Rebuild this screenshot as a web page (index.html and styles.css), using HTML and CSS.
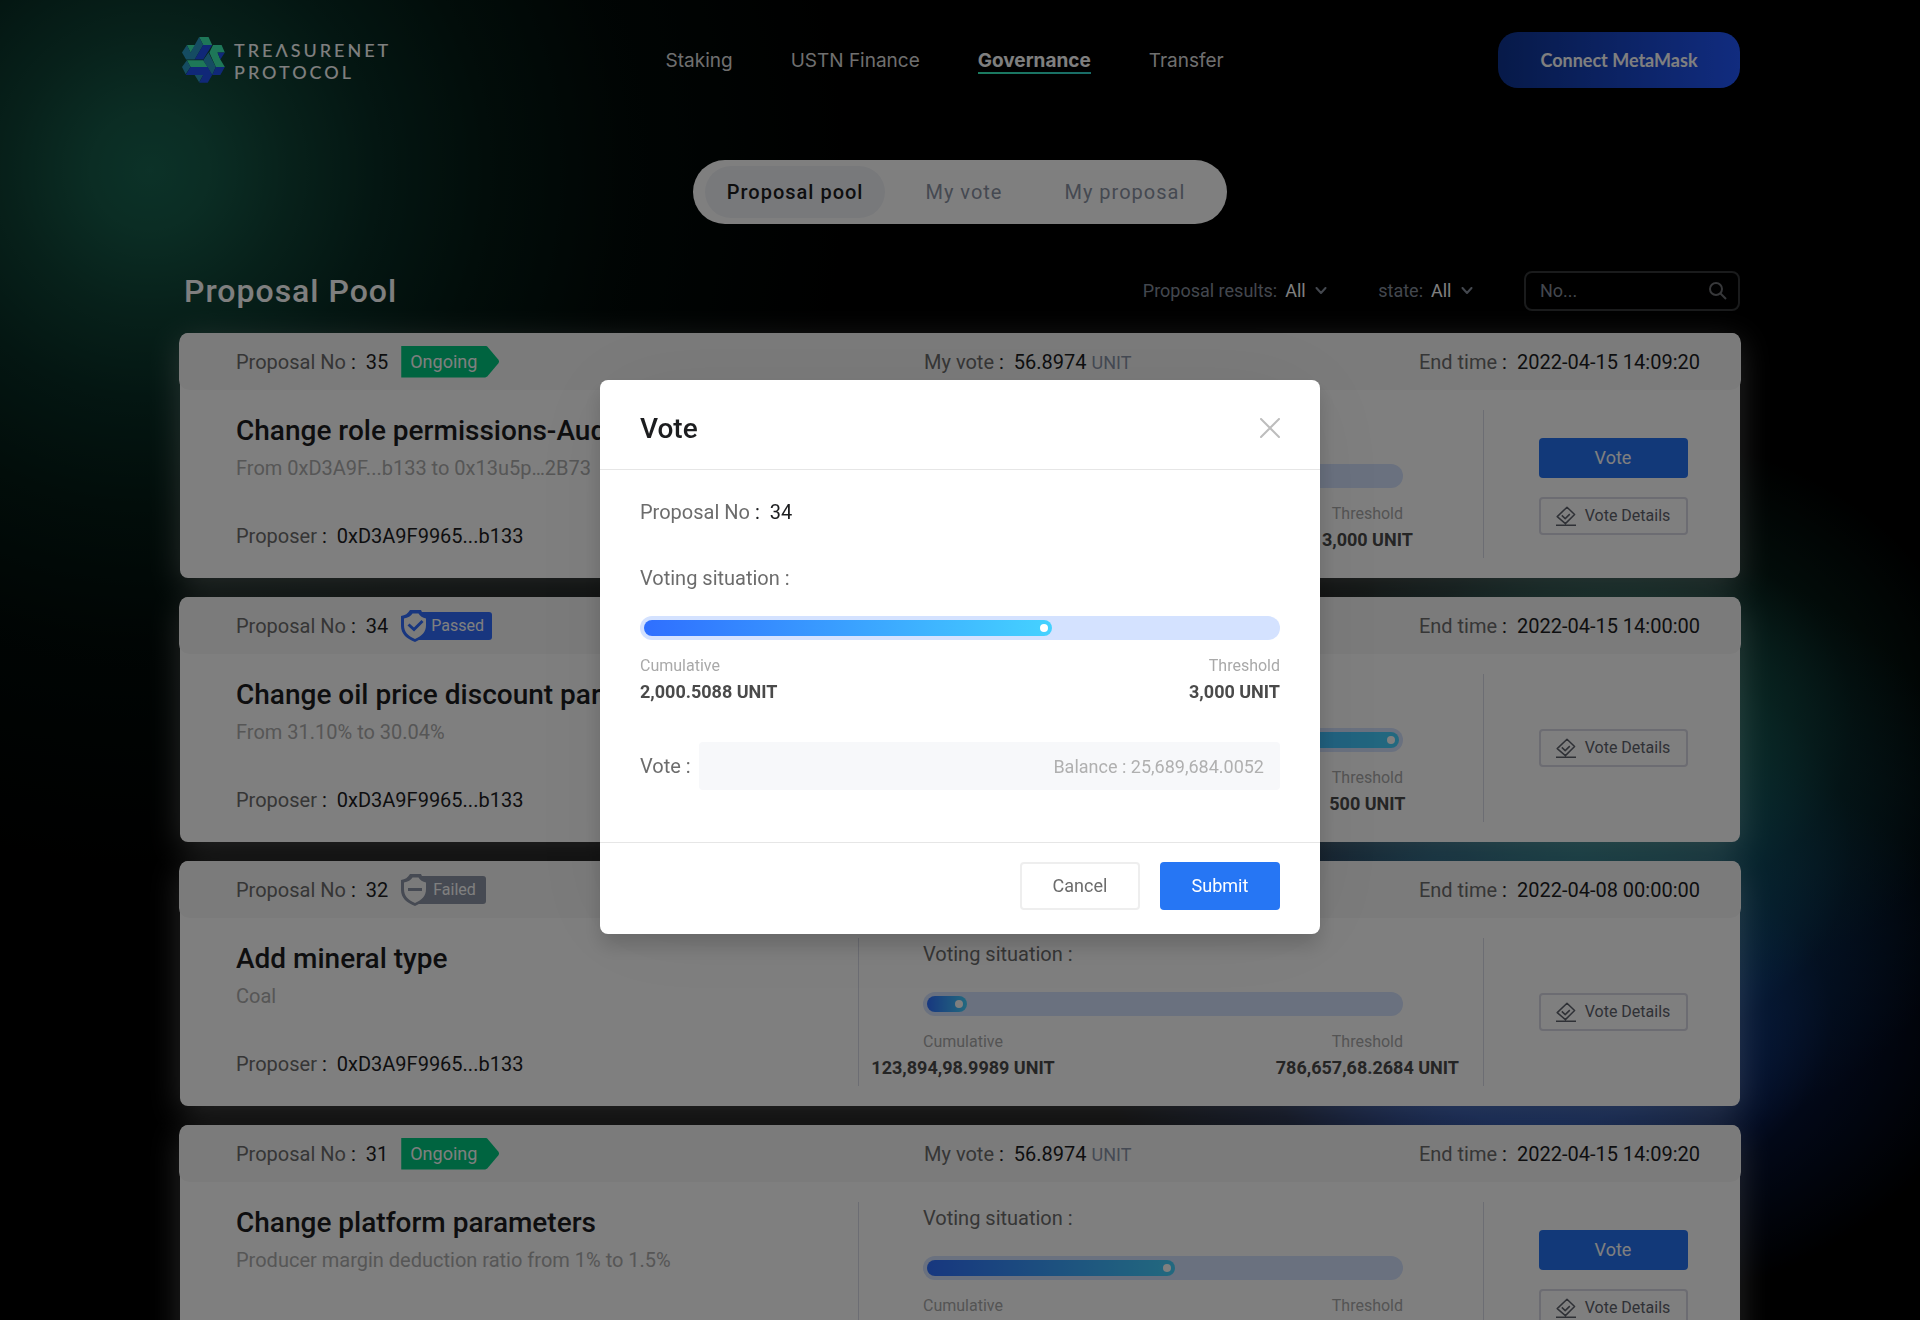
FILE: index.html
```html
<!DOCTYPE html>
<html lang="en">
<head>
<meta charset="utf-8">
<meta name="viewport" content="width=device-width, initial-scale=1">
<title>Treasurenet Protocol - Governance</title>
<link rel="stylesheet" href="styles.css">
</head>
<body>
<svg class="sprite" aria-hidden="true">
  <symbol id="chevron" viewBox="0 0 12 8"><path d="M1.500 1l4.500 5 4.500-5" fill="none" stroke="currentColor" stroke-width="2" stroke-linecap="round" stroke-linejoin="round"/></symbol>
  <symbol id="ballot" viewBox="0 0 20 20"><path d="M11 1.200L18.600 8.500 9.400 17.600 1.200 10.600z M5.800 9.400l3.400 3.200 4.600-4.500M0 19.200h20" fill="none" stroke="currentColor" stroke-width="1.500" stroke-linejoin="round"/></symbol>
  <symbol id="shield-check" viewBox="0 0 26 32"><path d="M0 6C4 5.500 7 3.500 9 0h11c1 3 3 5 6 6v12c0 6-5 11-12 14C6 29 0 24 0 16z" fill="currentColor"/><path d="M3 8.500c4-.5 7-2.500 8.500-5h6C19 6 21.500 8 25 8.500V15c0 7-4 11-11 14C7 26 3 22 3 15z" fill="#f7f7f7"/><path d="M7.500 14.500l5.500 5 8.500-8.500" fill="none" stroke="currentColor" stroke-width="3"/></symbol>
  <symbol id="shield-minus" viewBox="0 0 26 32"><path d="M0 6C4 5.500 7 3.500 9 0h11c1 3 3 5 6 6v12c0 6-5 11-12 14C6 29 0 24 0 16z" fill="currentColor"/><path d="M3 8.500c4-.5 7-2.500 8.500-5h6C19 6 21.500 8 25 8.500V15c0 7-4 11-11 14C7 26 3 22 3 15z" fill="#f7f7f7"/><path d="M7 15.500h14" fill="none" stroke="currentColor" stroke-width="3"/></symbol>
</svg>

<div class="page">
  <div class="container">
    <header class="topbar">
      <a class="logo" href="#">
        <svg class="logo-mark" viewBox="0 0 43 46" aria-hidden="true">
          <g transform="scale(.408 .336) translate(-55 -51)">
            <path fill="#3ceeb0" d="M97 51h23l9 24h-22zM67 75h21L76 97zM131 75h21l8 22h-18l7 21 11 22h-22l-16-43zM67 120h40l11 20H76z"/>
            <path fill="#2a98c4" d="M55 97l12-22 9 22-11 21zM97 51l10 24-21 43H65l11-21zM120 97l18 43-9 24-22-44zM67 120l9 20-12 22-9-22zM86 164h21l-10 22z"/>
            <path fill="#2050f0" d="M107 75h22l-22 43H86zM142 97h18l-11 21zM76 140h42l11 24H64zM138 140h22l-11 24h-20zM107 164h22l-11 23H97z"/>
          </g>
        </svg>
        <span class="logo-text">TREΛSURENET<br>PROTOCOL</span>
      </a>
      <nav class="nav">
        <a href="#">Staking</a>
        <a href="#">USTN Finance</a>
        <a class="current" href="#">Governance</a>
        <a href="#">Transfer</a>
      </nav>
      <button class="connect" type="button">Connect MetaMask</button>
    </header>

    <div class="tabs">
      <button class="tab active" type="button">Proposal pool</button>
      <button class="tab" type="button">My vote</button>
      <button class="tab" type="button">My proposal</button>
    </div>

    <main>
      <div class="toolbar">
        <h1>Proposal Pool</h1>
        <div class="filters">
          <div class="filter">
            <label for="results">Proposal results:</label>
            <span class="select"><select id="results"><option>All</option></select><svg><use href="#chevron"/></svg></span>
          </div>
          <div class="filter">
            <label for="state">state:</label>
            <span class="select"><select id="state"><option>All</option></select><svg><use href="#chevron"/></svg></span>
          </div>
          <div class="search">
            <input type="text" placeholder="No..." aria-label="Proposal number">
            <svg viewBox="0 0 18 18"><circle cx="7" cy="7" r="6"/><path d="M11.500 11.500l5.500 5.500"/></svg>
          </div>
        </div>
      </div>

      <div class="cards">
        <article class="card">
          <div class="card-head">
            <div class="pair"><span class="key">Proposal No <i>:</i></span><b>35</b><span class="flag">Ongoing</span></div>
            <div class="card-meta">
              <div class="pair"><span class="key">My vote <i>:</i></span><b>56.8974 <small>UNIT</small></b></div>
              <div class="pair"><span class="key">End time <i>:</i></span><b>2022-04-15 14:09:20</b></div>
            </div>
          </div>
          <div class="card-body">
            <div class="summary">
              <h2>Change role permissions-Auditor</h2>
              <p>From 0xD3A9F...b133 to 0x13u5p…2B73</p>
              <div class="pair"><span class="key">Proposer <i>:</i></span><b>0xD3A9F9965...b133</b></div>
            </div>
            <div class="voting">
              <div class="key">Voting situation :</div>
              <div class="bar"><div class="fill" style="width:66%"></div></div>
              <div class="figures">
                <div class="figure"><span>Cumulative</span><strong>2,000.5088 UNIT</strong></div>
                <div class="figure"><span>Threshold</span><strong>3,000 UNIT</strong></div>
              </div>
            </div>
            <div class="actions">
              <button class="vote" type="button">Vote</button>
              <button class="details" type="button"><svg><use href="#ballot"/></svg>Vote Details</button>
            </div>
          </div>
        </article>

        <article class="card">
          <div class="card-head">
            <div class="pair"><span class="key">Proposal No <i>:</i></span><b>34</b><span class="badge passed"><svg><use href="#shield-check"/></svg><span>Passed</span></span></div>
            <div class="card-meta">
              <div></div>
              <div class="pair"><span class="key">End time <i>:</i></span><b>2022-04-15 14:00:00</b></div>
            </div>
          </div>
          <div class="card-body">
            <div class="summary">
              <h2>Change oil price discount parameters</h2>
              <p>From 31.10% to 30.04%</p>
              <div class="pair"><span class="key">Proposer <i>:</i></span><b>0xD3A9F9965...b133</b></div>
            </div>
            <div class="voting">
              <div class="key">Voting situation :</div>
              <div class="bar"><div class="fill" style="width:100%"></div></div>
              <div class="figures">
                <div class="figure"><span>Cumulative</span><strong>500 UNIT</strong></div>
                <div class="figure"><span>Threshold</span><strong>500 UNIT</strong></div>
              </div>
            </div>
            <div class="actions">
              <button class="details" type="button"><svg><use href="#ballot"/></svg>Vote Details</button>
            </div>
          </div>
        </article>

        <article class="card">
          <div class="card-head">
            <div class="pair"><span class="key">Proposal No <i>:</i></span><b>32</b><span class="badge failed"><svg><use href="#shield-minus"/></svg><span>Failed</span></span></div>
            <div class="card-meta">
              <div></div>
              <div class="pair"><span class="key">End time <i>:</i></span><b>2022-04-08 00:00:00</b></div>
            </div>
          </div>
          <div class="card-body">
            <div class="summary">
              <h2>Add mineral type</h2>
              <p>Coal</p>
              <div class="pair"><span class="key">Proposer <i>:</i></span><b>0xD3A9F9965...b133</b></div>
            </div>
            <div class="voting">
              <div class="key">Voting situation :</div>
              <div class="bar"><div class="fill" style="width:8.500%"></div></div>
              <div class="figures">
                <div class="figure"><span>Cumulative</span><strong>123,894,98.9989 UNIT</strong></div>
                <div class="figure"><span>Threshold</span><strong>786,657,68.2684 UNIT</strong></div>
              </div>
            </div>
            <div class="actions">
              <button class="details" type="button"><svg><use href="#ballot"/></svg>Vote Details</button>
            </div>
          </div>
        </article>

        <article class="card">
          <div class="card-head">
            <div class="pair"><span class="key">Proposal No <i>:</i></span><b>31</b><span class="flag">Ongoing</span></div>
            <div class="card-meta">
              <div class="pair"><span class="key">My vote <i>:</i></span><b>56.8974 <small>UNIT</small></b></div>
              <div class="pair"><span class="key">End time <i>:</i></span><b>2022-04-15 14:09:20</b></div>
            </div>
          </div>
          <div class="card-body">
            <div class="summary">
              <h2>Change platform parameters</h2>
              <p>Producer margin deduction ratio from 1% to 1.5%</p>
              <div class="pair"><span class="key">Proposer <i>:</i></span><b>0xD3A9F9965...b133</b></div>
            </div>
            <div class="voting">
              <div class="key">Voting situation :</div>
              <div class="bar"><div class="fill" style="width:52.500%"></div></div>
              <div class="figures">
                <div class="figure"><span>Cumulative</span><strong>1,575 UNIT</strong></div>
                <div class="figure"><span>Threshold</span><strong>3,000 UNIT</strong></div>
              </div>
            </div>
            <div class="actions">
              <button class="vote" type="button">Vote</button>
              <button class="details" type="button"><svg><use href="#ballot"/></svg>Vote Details</button>
            </div>
          </div>
        </article>
      </div>
    </main>
  </div>
</div>

<div class="overlay">
  <form class="modal" role="dialog" aria-modal="true" aria-labelledby="modal-title">
    <div class="modal-head">
      <h2 id="modal-title">Vote</h2>
      <button class="close" type="button" aria-label="Close"><svg viewBox="0 0 20 20"><path d="M1 1l18 18M19 1L1 19"/></svg></button>
    </div>
    <div class="modal-body">
      <div class="pair"><span class="key">Proposal No <i>:</i></span><b>34</b></div>
      <div class="key situation">Voting situation :</div>
      <div class="bar"><div class="fill" style="width:64.500%"></div></div>
      <div class="figures">
        <div class="figure start"><span>Cumulative</span><strong>2,000.5088 UNIT</strong></div>
        <div class="figure end"><span>Threshold</span><strong>3,000 UNIT</strong></div>
      </div>
      <div class="amount">
        <label class="key" for="amount">Vote :</label>
        <input id="amount" type="text" placeholder="Balance : 25,689,684.0052">
      </div>
    </div>
    <div class="modal-foot">
      <button class="cancel" type="button">Cancel</button>
      <button class="submit" type="submit">Submit</button>
    </div>
  </form>
</div>
</body>
</html>
```

FILE: styles.css
```css
*,
*::before,
*::after {
  box-sizing: border-box;
}

body {
  margin: 0;
  background: #000;
  color: #1c1d1f;
  font: 20px/24px Roboto, "Liberation Sans", sans-serif;
}

h1,
h2,
p {
  margin: 0;
}

a {
  color: inherit;
  text-decoration: none;
}

button,
input,
select {
  margin: 0;
  padding: 0;
  border: 0;
  background: none;
  color: inherit;
  font: inherit;
}

button {
  cursor: pointer;
}

.sprite {
  position: absolute;
  width: 0;
  height: 0;
}

/* the page behind the dialog does not scroll while it is open */
.page {
  height: 100vh;
  overflow: hidden;
  background:
    radial-gradient(circle at 150px 170px, #186450 0, #165a48 60px, #0f4235 140px, #082c24 230px, #041a14 340px, rgba(2, 14, 11, 0.7) 480px, transparent 720px),
    radial-gradient(ellipse 360px 290px at calc(100% - 300px) 720px, rgba(30, 116, 92, 0.8) 0, rgba(26, 104, 84, 0.65) 35%, rgba(16, 72, 58, 0.35) 65%, transparent 100%),
    radial-gradient(ellipse 400px 310px at calc(100% - 340px) 850px, rgba(20, 116, 164, 0.95) 0, rgba(18, 100, 150, 0.8) 35%, rgba(12, 60, 96, 0.4) 68%, transparent 100%),
    radial-gradient(ellipse 450px 300px at calc(100% - 380px) 1020px, #1c4cc0 0, #143ca0 35%, rgba(8, 28, 80, 0.6) 65%, transparent 100%),
    #000;
}

.container {
  width: min(1560px, 100% - 48px);
  margin: 0 auto;
  padding: 32px 0;
}

/* top bar */
.topbar {
  display: flex;
  align-items: center;
  justify-content: space-between;
  height: 56px;
}

.logo {
  display: flex;
  align-items: center;
  gap: 9px;
  padding-left: 2px;
}

.logo-mark {
  width: 43px;
  height: 46px;
}

.logo-text {
  padding-top: 2px;
  color: #fff;
  font: 500 18px/22px Lato, sans-serif;
  letter-spacing: 3px;
}

.nav {
  display: flex;
  gap: 58px;
  padding-top: 2px;
  color: #dedede;
  font: 19px/24px Inter, sans-serif;
}

.nav a {
  padding-top: 2px;
  border-bottom: 2px solid transparent;
  line-height: 22px;
}

.nav .current {
  border-image: linear-gradient(90deg, #36f8c0, #32d8d0) 1;
  color: #fff;
  font-weight: 700;
}

.connect {
  width: 242px;
  height: 56px;
  border-radius: 20px;
  background: linear-gradient(90deg, #0e3492, #2258ff);
  color: #fff;
  font: 700 18px/24px Lato, sans-serif;
}

/* tabs */
.tabs {
  display: flex;
  gap: 18px;
  width: fit-content;
  margin: 72px auto 47px;
  padding: 6px 20px 6px 12px;
  border-radius: 32px;
  background: #fff;
}

.tab {
  height: 52px;
  padding: 0 22px;
  border-radius: 26px;
  color: #8a92a3;
  letter-spacing: 1px;
}

.tab.active {
  background: #f1f3f7;
  color: #1c1d1f;
  font-weight: 500;
}

/* title and filters */
.toolbar {
  display: flex;
  align-items: center;
  justify-content: space-between;
  height: 40px;
  margin-bottom: 22px;
}

.toolbar h1 {
  padding-left: 4px;
  color: #fff;
  font-size: 32px;
  font-weight: 500;
  line-height: 40px;
  letter-spacing: 1px;
}

.filters {
  display: flex;
  align-items: center;
  gap: 51px;
  color: #868e9c;
  font-size: 18px;
}

.filter {
  display: flex;
  gap: 8px;
}

.select {
  display: grid;
  align-items: center;
  width: 42px;
}

.select select {
  grid-area: 1 / 1;
  width: 100%;
  appearance: none;
  color: #fff;
}

.select svg {
  grid-area: 1 / 1;
  justify-self: end;
  width: 12px;
  height: 8px;
  pointer-events: none;
}

.search {
  display: flex;
  align-items: center;
  width: 216px;
  height: 40px;
  padding: 0 11px 0 14px;
  border: 2px solid #343638;
  border-radius: 8px;
}

.search input {
  flex: 1;
  min-width: 0;
  outline: 0;
}

.search input::placeholder {
  color: #868e9c;
  opacity: 1;
}

.search svg {
  width: 18px;
  height: 18px;
  fill: none;
  stroke: #6e7074;
  stroke-width: 2;
}

/* label and value */
.pair {
  display: flex;
  align-items: center;
  white-space: nowrap;
}

.key {
  color: #6c6c6c;
}

.key i {
  color: #1c1d1f;
  font-style: normal;
}

.pair b {
  margin-left: 10px;
  font-weight: 400;
}

.pair small {
  color: #8a94a8;
  font-size: 18px;
  line-height: 18px;
}

/* cards */
.cards {
  display: grid;
  gap: 19px;
}

.card {
  border-radius: 8px;
  background: #fff;
  box-shadow: 0 8px 32px rgba(255, 255, 255, 0.3);
}

.card-head {
  display: grid;
  grid-template-columns: 1fr 776px;
  align-items: center;
  height: 57px;
  margin: 0 -1px;
  padding: 0 41px 0 57px;
  border-radius: 10px;
  background: #f7f7f7;
}

.card-meta {
  display: flex;
  justify-content: space-between;
}

.flag {
  width: 98px;
  height: 32px;
  margin-left: 13px;
  padding-left: 9px;
  background: #00c880;
  clip-path: polygon(0 0, 84px 0, 86px 1px, 97px 14px, 98px 16px, 97px 18px, 86px 31px, 84px 32px, 0 32px);
  color: #fff;
  font-size: 18px;
  line-height: 32px;
}

.badge {
  display: flex;
  align-items: center;
  margin-left: 13px;
  font-size: 16px;
  line-height: 28px;
}

.badge svg {
  z-index: 1;
  width: 26px;
  height: 32px;
}

.badge span {
  margin-left: -12px;
  padding: 0 8px 0 16px;
  border-radius: 3px;
  background: currentColor;
}

.badge span::first-line {
  color: #fff;
}

.passed {
  color: #306cff;
}

.failed {
  color: #8c94a6;
}

.failed span {
  padding: 0 10px 0 18px;
}

.card-body {
  display: grid;
  grid-template-columns: minmax(0, 1fr) 626px 256px;
  height: 188px;
}

.summary {
  padding: 25px 56px 0;
}

.summary h2 {
  overflow: hidden;
  font-size: 28px;
  font-weight: 500;
  line-height: 32px;
  text-overflow: ellipsis;
  white-space: nowrap;
}

.summary p {
  margin: 9px 0 44px;
  color: #adadad;
}

.voting {
  margin: 20px 0;
  padding: 4px 80px 0 64px;
  border: solid #d8dae6;
  border-width: 0 1px;
}

.bar {
  height: 24px;
  margin: 26px 0 16px;
  padding: 4px;
  border-radius: 12px;
  background: #d4e2ff;
}

.fill {
  display: flex;
  align-items: center;
  justify-content: flex-end;
  height: 16px;
  padding-right: 4px;
  border-radius: 8px;
  background: linear-gradient(90deg, #2f6fff, #45d2ff);
}

.fill::after {
  content: "";
  width: 8px;
  height: 8px;
  border-radius: 50%;
  background: #fff;
}

.figures {
  display: flex;
  justify-content: space-between;
}

.figure {
  display: grid;
  gap: 4px;
  text-align: center;
  white-space: nowrap;
}

.figure span {
  color: #a9a9a9;
  font-size: 16px;
  line-height: 20px;
}

/* values may be wider than their label and stay centred under it */
.figure strong {
  margin: 0 -100px;
  color: #4a4a4a;
  font-size: 18px;
  font-weight: 700;
}

.figure.start strong,
.figure.end strong {
  margin: 0;
}

.figure.start {
  text-align: left;
}

.figure.end {
  text-align: right;
}

.actions {
  display: flex;
  flex-direction: column;
  align-items: center;
  justify-content: center;
  gap: 19px;
  padding-left: 2px;
}

.vote,
.details {
  width: 149px;
  border-radius: 4px;
}

.vote {
  height: 40px;
  margin-top: 5px;
  background: #2573f2;
  color: #fff;
  font-size: 18px;
}

.details {
  display: flex;
  align-items: center;
  justify-content: center;
  gap: 9px;
  height: 38px;
  border: 2px solid #d8d8e4;
  color: #5e626c;
  font-size: 16px;
}

.details svg {
  width: 20px;
  height: 20px;
}

/* dialog */
.overlay {
  position: fixed;
  inset: 0;
  z-index: 10;
  display: flex;
  align-items: center;
  justify-content: center;
  padding-bottom: 6px;
  background: rgba(0, 0, 0, 0.5);
}

.modal {
  width: 720px;
  border-radius: 8px;
  background: #fff;
  box-shadow: 0 12px 20px rgba(0, 0, 0, 0.16), 0 0 100px rgba(0, 0, 0, 0.06);
}

.modal-head {
  display: flex;
  align-items: center;
  justify-content: space-between;
  height: 90px;
  padding: 6px 40px 0;
  border-bottom: 1px solid #e6e6e6;
}

.modal-head h2 {
  padding-top: 2px;
  font-size: 28px;
  font-weight: 500;
  line-height: 32px;
}

.close {
  display: flex;
}

.close svg {
  width: 20px;
  height: 20px;
  fill: none;
  stroke: #bdbdbd;
  stroke-width: 2;
  stroke-linecap: round;
}

.modal-body {
  padding: 30px 40px 52px;
}

.situation {
  margin-top: 42px;
}

.amount {
  display: flex;
  align-items: center;
  gap: 8px;
  margin-top: 38px;
}

.amount input {
  flex: 1;
  min-width: 0;
  height: 48px;
  padding: 0 16px;
  border-radius: 4px;
  background: #f7f8fa;
  font-size: 18px;
  text-align: right;
  outline: 0;
}

.amount input::placeholder {
  color: #b0b0b0;
  opacity: 1;
}

.modal-foot {
  display: flex;
  justify-content: flex-end;
  gap: 20px;
  padding: 19px 40px 24px;
  border-top: 1px solid #e6e6e6;
}

.cancel,
.submit {
  width: 120px;
  height: 48px;
  border-radius: 4px;
  font-size: 18px;
}

.cancel {
  border: 2px solid #eee;
  color: #6c6c6c;
}

.submit {
  background: #2676f4;
  color: #fff;
}
```
